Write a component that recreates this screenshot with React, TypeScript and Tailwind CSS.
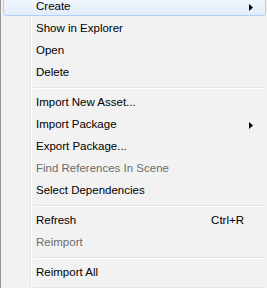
import React from "react";

type Item =
  | { kind: "sep" }
  | { kind: "item"; label: string; disabled?: boolean; sub?: boolean; shortcut?: string; active?: boolean };

const items: Item[] = [
  { kind: "item", label: "Create", sub: true, active: true },
  { kind: "item", label: "Show in Explorer" },
  { kind: "item", label: "Open" },
  { kind: "item", label: "Delete" },
  { kind: "sep" },
  { kind: "item", label: "Import New Asset..." },
  { kind: "item", label: "Import Package", sub: true },
  { kind: "item", label: "Export Package..." },
  { kind: "item", label: "Find References In Scene", disabled: true },
  { kind: "item", label: "Select Dependencies" },
  { kind: "sep" },
  { kind: "item", label: "Refresh", shortcut: "Ctrl+R" },
  { kind: "item", label: "Reimport", disabled: true },
  { kind: "sep" },
  { kind: "item", label: "Reimport All" },
  { kind: "sep" },
];

function Arrow() {
  return (
    <svg width="4" height="7" viewBox="0 0 4 7" className="block">
      <path d="M0 0 L4 3.5 L0 7 Z" fill="#000" />
    </svg>
  );
}

function Row({ item }: { item: Extract<Item, { kind: "item" }> }) {
  return (
    <div
      className={`h-[20px] mb-[2px] pt-[2px] flex items-center pl-[32px] pr-[12px] rounded-[3px] border mr-[1px] ${
        item.active
          ? "border-[#aecff7] bg-gradient-to-b from-[#f2f7fd] to-[#e3edfa]"
          : "border-transparent"
      } ${item.disabled ? "text-[#6d6d6d]" : "text-black"}`}
    >
      <span className="flex-1 whitespace-nowrap">{item.label}</span>
      {item.shortcut && <span className="whitespace-nowrap">{item.shortcut}</span>}
      <span className="w-[4px] ml-[5px] flex items-center">{item.sub && <Arrow />}</span>
    </div>
  );
}

export default function App() {
  return (
    <div className="w-[267px] h-[288px] overflow-hidden bg-[#f2f2f2] border-l border-[#979797] font-['Liberation_Sans',Arial,sans-serif] text-[11.5px] leading-none">
      <div className="relative h-full pl-[2px]">
        <div className="absolute left-[29px] top-0 bottom-0 w-[2px] border-l border-[#e2e3e3] bg-white" />
        <div className="relative -mt-[4px] flex flex-col">
          {items.map((it, i) =>
            it.kind === "sep" ? (
              <div key={i} className="h-[8px] flex flex-col justify-center pl-[31px] pr-[2px]">
                <div className="h-[1px] bg-[#e2e3e3]" />
                <div className="h-[1px] bg-white" />
              </div>
            ) : (
              <Row key={i} item={it} />
            )
          )}
        </div>
      </div>
    </div>
  );
}
